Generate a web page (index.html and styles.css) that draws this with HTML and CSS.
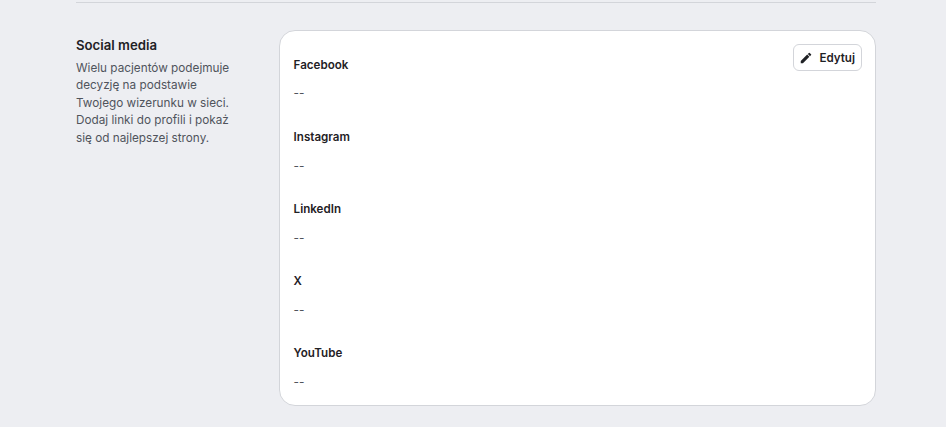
FILE: index.html
```html
<!DOCTYPE html>
<html lang="pl">
<head>
<meta charset="utf-8">
<title>Social media</title>
<link rel="stylesheet" href="styles.css">
</head>
<body>
<main class="page">
  <section class="section">
    <div class="intro">
      <h2 class="intro-title">Social media</h2>
      <p class="intro-text">Wielu pacjentów podejmuje decyzję na podstawie Twojego wizerunku w sieci. Dodaj linki do profili i pokaż się od najlepszej strony.</p>
    </div>
    <div class="card">
      <button class="edit" type="button">
        <svg class="edit-icon" viewBox="0 0 24 24" aria-hidden="true"><path d="M3 17.25V21h3.75L17.81 9.94l-3.75-3.75L3 17.25zM20.71 7.04a1 1 0 0 0 0-1.41l-2.34-2.34a1 1 0 0 0-1.41 0l-1.83 1.83 3.75 3.75 1.83-1.83z"/></svg>
        Edytuj
      </button>
      <div class="field"><div class="label">Facebook</div><div class="value">--</div></div>
      <div class="field"><div class="label">Instagram</div><div class="value">--</div></div>
      <div class="field"><div class="label">LinkedIn</div><div class="value">--</div></div>
      <div class="field"><div class="label">X</div><div class="value">--</div></div>
      <div class="field"><div class="label">YouTube</div><div class="value">--</div></div>
    </div>
  </section>
</main>
</body>
</html>
```
FILE: styles.css
```css
* { box-sizing: border-box; }
html, body { margin: 0; height: 100%; }
body { background: #edeef2; font-family: Inter, sans-serif; color: #1f2125; overflow: hidden; }
.page { width: 800px; margin: 2px 0 0 76px; border-top: 1px solid #d3d5da; padding-top: 27px; }
.section { display: flex; gap: 43px; }
.intro { width: 160px; flex: none; }
.intro-title { margin: 7px 0 0; font-size: 13.2px; line-height: 16px; font-weight: 600; }
.intro-text { margin: 6.5px 0 0; font-size: 11.75px; line-height: 17.6px; color: #50545c; }
.card { position: relative; flex: 1; height: 376px; background: #fff; border: 1px solid #d3d5da; border-radius: 16px; padding: 26px 13.6px 0; }
.edit { position: absolute; top: 13px; right: 13px; height: 27px; display: flex; align-items: center; gap: 6px; padding: 0 6px 0 5px; background: #fff; border: 1px solid #d3d5da; border-radius: 6px; font: 600 11.6px Inter, sans-serif; color: #1f2125; }
.edit-icon { width: 14px; height: 14px; fill: #1f2125; }
.field { height: 72.1px; }
.label { font-size: 11.6px; line-height: 16px; font-weight: 600; }
.value { margin-top: 12.45px; font-size: 11.8px; line-height: 16px; color: #50545c; }
```
